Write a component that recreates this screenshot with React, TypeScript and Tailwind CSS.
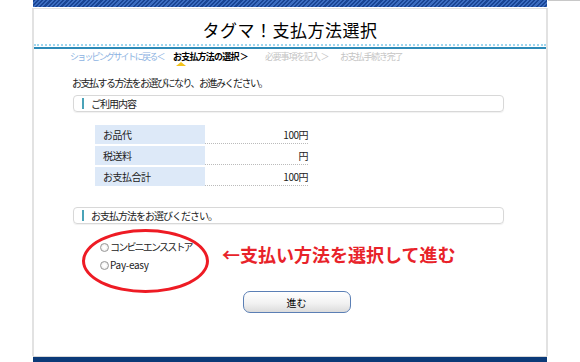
import React from "react";

const jp = { fontFamily: '"Noto Sans CJK JP", "Noto Sans", sans-serif' };

function SectionHeader({ label }: { label: string }) {
  return (
    <div className="ml-[1px] mr-[42px] h-[17px] rounded-[4px] border border-[#d8d8d8] flex items-center pl-[8px] shadow-[0_1px_1px_rgba(0,0,0,0.06)]">
      <div className="w-[2px] h-[11px] bg-[#4aa3b8]" />
      <span className="ml-[7px] text-[10px] leading-none text-[#222] tracking-[-1px]">{label}</span>
    </div>
  );
}

function Row({ label, value }: { label: string; value: string }) {
  return (
    <div className="flex h-[19px] mb-[2px]">
      <div className="w-[110px] bg-[#dde9f8] flex items-center pl-[8px] text-[10px] text-[#222] tracking-[-0.5px]">{label}</div>
      <div className="w-[103px] border-b border-dotted border-[#bbb] flex items-center justify-end text-[10px] text-[#222] tracking-[-0.5px]">{value}</div>
    </div>
  );
}

export default function App() {
  return (
    <div className="w-[580px] h-[362px] bg-white relative overflow-hidden" style={jp}>
      <div className="absolute top-0 right-0 w-[32px] h-[1px] bg-[#c8c8c8]" />
      <div className="mx-[32px] w-[516px] h-[362px] flex flex-col">
        <div className="h-[7px] mx-[1px] bg-[repeating-linear-gradient(135deg,#1a4594_0px,#1a4594_1.5px,#3b6cc0_1.5px,#3b6cc0_3px)]" />
        <div className="h-[1px]" />
        <div className="flex-1 border-x-2 border-t border-[#e2e2e2] flex flex-col relative">
          <div className="h-[34px] flex items-center justify-center pt-[7px] text-[17px] text-black tracking-[0.5px]">
            タグマ！支払方法選択
          </div>
          <div className="border-t-2 border-dotted border-[#9fd6ee] mt-[1px]" />
          <div className="h-[1px]" />
          <div className="border-t-2 border-[#2c8ab8]" />
          <div className="flex items-center h-[13px] mt-[1px] pl-[36px] text-[9px] leading-none relative whitespace-nowrap">
            <span className="w-[103px] text-[#8db3e2] tracking-[-1.8px]">ショッピングサイトに戻る ＜</span>
            <span className="w-[92px] text-black font-bold relative tracking-[-0.8px]">
              お支払方法の選択 ＞
              <span className="absolute left-[3px] top-[10px] w-0 h-0 border-x-[5px] border-x-transparent border-b-[4px] border-b-[#f2c21a]" />
            </span>
            <span className="w-[75px] text-[#c4c4c4] tracking-[-1.2px]">必要事項を記入 ＞</span>
            <span className="text-[#c4c4c4] tracking-[-1.2px]">お支払手続き完了</span>
          </div>
          <div className="pl-[38px] mt-[15px] text-[10px] leading-none text-[#222] tracking-[-1.5px]">
            お支払する方法をお選びになり、お進みください。
          </div>
          <div className="pl-[38px] mt-[7px]">
            <SectionHeader label="ご利用内容" />
          </div>
          <div className="pl-[61px] mt-[13px]">
            <Row label="お品代" value="100円" />
            <Row label="税送料" value="円" />
            <Row label="お支払合計" value="100円" />
          </div>
          <div className="pl-[38px] mt-[19px]">
            <SectionHeader label="お支払方法をお選びください。" />
          </div>
          <div className="flex pl-[66px] mt-[16px] relative">
            <div className="w-[92px] flex flex-col gap-[8px] text-[10px] leading-none text-[#222] pt-[2px] whitespace-nowrap">
              <label className="flex items-center tracking-[-1.8px]">
                <span className="w-[9px] h-[9px] shrink-0 rounded-full border border-[#999] bg-[radial-gradient(circle,#fff_30%,#ddd)] mr-[1px]" />
                コンビニエンスストア
              </label>
              <label className="flex items-center tracking-[-0.3px]">
                <span className="w-[9px] h-[9px] shrink-0 rounded-full border border-[#999] bg-[radial-gradient(circle,#fff_30%,#ddd)] mr-[1px]" />
                Pay-easy
              </label>
            </div>
            <div className="absolute left-[48px] top-[-11px] w-[127px] h-[64px] rounded-[50%] border-[3px] border-[#ee1b24]" />
            <div className="ml-[30px] mt-[5px] text-[18px] font-bold text-[#e8232a] leading-none whitespace-nowrap">
              ←支払い方法を選択して進む
            </div>
          </div>
          <div className="flex justify-center mt-[21px] pl-[13px]">
            <button className="w-[108px] h-[22px] rounded-[7px] border border-[#5b7fb5] bg-[linear-gradient(#ffffff,#f2f2f2_55%,#dcdcdc)] text-[10px] text-black">
              進む
            </button>
          </div>
          <div className="flex-1" />
        </div>
        <div className="h-[6px] mx-[1px] bg-[#0b3a78] border-t border-[#d8d8d8]" />
      </div>
    </div>
  );
}
